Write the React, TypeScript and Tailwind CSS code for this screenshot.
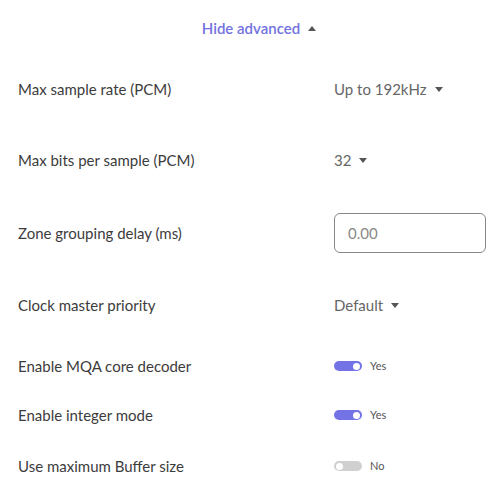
import React from 'react';

function Caret({ up = false }: { up?: boolean }) {
  return (
    <svg width="8" height="5" viewBox="0 0 8 5" className="ml-2" aria-hidden="true">
      <path d={up ? 'M0 5 L4 0 L8 5 Z' : 'M0 0 L8 0 L4 5 Z'} fill="#555" />
    </svg>
  );
}

function Toggle({ on }: { on: boolean }) {
  return (
    <div className="flex items-center">
      <div
        className={
          on
            ? 'w-[28px] h-[10px] rounded-full bg-[#7373e6] flex items-center justify-end pr-[2px]'
            : 'w-[28px] h-[10px] rounded-full bg-[#d0d0d0] flex items-center justify-start pl-[2px]'
        }
      >
        <div className="w-[7px] h-[7px] rounded-full bg-white" />
      </div>
      <span className="ml-2 text-[11px] text-[#555]">{on ? 'Yes' : 'No'}</span>
    </div>
  );
}

function Row({ label, h, children }: { label: string; h: string; children: React.ReactNode }) {
  return (
    <div className={`flex items-center ${h}`}>
      <div className="w-[316px] text-[15px] text-[#3c3c3c]">{label}</div>
      <div className="flex-1 flex items-center">{children}</div>
    </div>
  );
}

function Dropdown({ value }: { value: string }) {
  return (
    <div className="flex items-center text-[15px] text-[#666]">
      {value}
      <Caret />
    </div>
  );
}

export default function App() {
  return (
    <div className="w-[495px] h-[493px] bg-white pl-[18px] pr-[9px]" style={{ fontFamily: 'Lato, "Noto Sans", sans-serif' }}>
      <div className="h-[56px] flex items-center justify-center pl-[14px]">
        <span className="text-[15px] font-semibold text-[#7272e0]">Hide advanced</span>
        <Caret up />
      </div>
      <Row label="Max sample rate (PCM)" h="h-[66px]">
        <Dropdown value="Up to 192kHz" />
      </Row>
      <Row label="Max bits per sample (PCM)" h="h-[76px]">
        <Dropdown value="32" />
      </Row>
      <Row label="Zone grouping delay (ms)" h="h-[70px]">
        <input
          className="w-[152px] h-[40px] border border-[#888] rounded-[6px] px-[13px] text-[15px] text-[#666] placeholder-[#888] outline-none"
          placeholder="0.00"
        />
      </Row>
      <Row label="Clock master priority" h="h-[74px]">
        <Dropdown value="Default" />
      </Row>
      <Row label="Enable MQA core decoder" h="h-[48px]">
        <Toggle on />
      </Row>
      <Row label="Enable integer mode" h="h-[50px]">
        <Toggle on />
      </Row>
      <Row label="Use maximum Buffer size" h="h-[52px]">
        <Toggle on={false} />
      </Row>
    </div>
  );
}
